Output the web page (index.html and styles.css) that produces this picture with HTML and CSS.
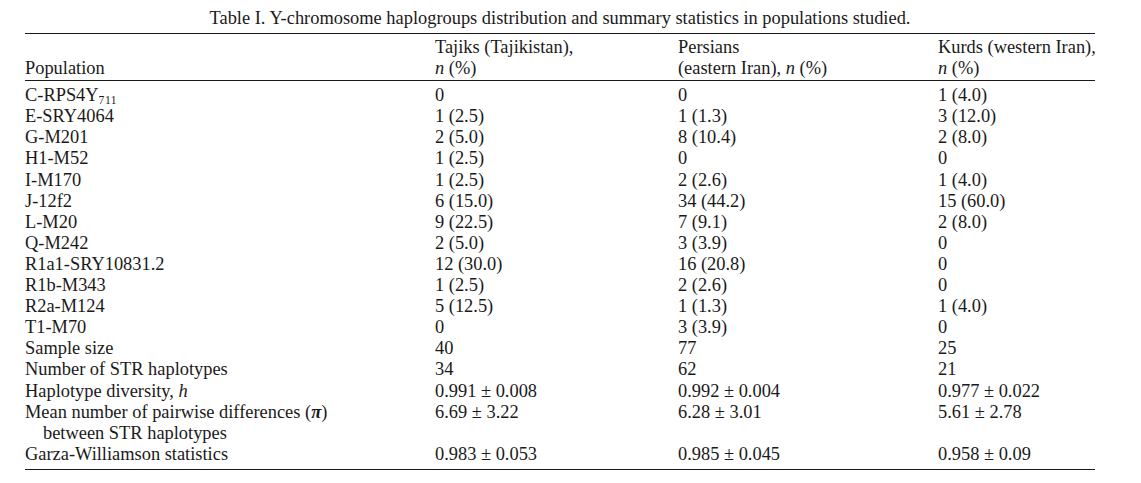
FILE: index.html
```html
<!DOCTYPE html>
<html>
<head>
<meta charset="utf-8">
<link rel="stylesheet" href="styles.css">
</head>
<body>
<div class="wrap">
  <div class="title">Table I. Y-chromosome haplogroups distribution and summary statistics in populations studied.</div>
  <table class="tbl">
    <colgroup>
      <col class="c1"><col class="c2"><col class="c3"><col class="c4">
    </colgroup>
    <thead>
      <tr>
        <th>Population</th>
        <th>Tajiks (Tajikistan),<br><i>n</i> (%)</th>
        <th>Persians<br>(eastern Iran), <i>n</i> (%)</th>
        <th>Kurds (western Iran),<br><i>n</i> (%)</th>
      </tr>
    </thead>
    <tbody>
      <tr class="first"><td>C-RPS4Y<sub>711</sub></td><td>0</td><td>0</td><td>1 (4.0)</td></tr>
      <tr><td>E-SRY4064</td><td>1 (2.5)</td><td>1 (1.3)</td><td>3 (12.0)</td></tr>
      <tr><td>G-M201</td><td>2 (5.0)</td><td>8 (10.4)</td><td>2 (8.0)</td></tr>
      <tr><td>H1-M52</td><td>1 (2.5)</td><td>0</td><td>0</td></tr>
      <tr><td>I-M170</td><td>1 (2.5)</td><td>2 (2.6)</td><td>1 (4.0)</td></tr>
      <tr><td>J-12f2</td><td>6 (15.0)</td><td>34 (44.2)</td><td>15 (60.0)</td></tr>
      <tr><td>L-M20</td><td>9 (22.5)</td><td>7 (9.1)</td><td>2 (8.0)</td></tr>
      <tr><td>Q-M242</td><td>2 (5.0)</td><td>3 (3.9)</td><td>0</td></tr>
      <tr><td>R1a1-SRY10831.2</td><td>12 (30.0)</td><td>16 (20.8)</td><td>0</td></tr>
      <tr><td>R1b-M343</td><td>1 (2.5)</td><td>2 (2.6)</td><td>0</td></tr>
      <tr><td>R2a-M124</td><td>5 (12.5)</td><td>1 (1.3)</td><td>1 (4.0)</td></tr>
      <tr><td>T1-M70</td><td>0</td><td>3 (3.9)</td><td>0</td></tr>
      <tr><td>Sample size</td><td>40</td><td>77</td><td>25</td></tr>
      <tr><td>Number of STR haplotypes</td><td>34</td><td>62</td><td>21</td></tr>
      <tr><td>Haplotype diversity, <i>h</i></td><td>0.991 ± 0.008</td><td>0.992 ± 0.004</td><td>0.977 ± 0.022</td></tr>
      <tr><td>Mean number of pairwise differences (<b><i>π</i></b>)<br><span class="indent">between STR haplotypes</span></td><td>6.69 ± 3.22</td><td>6.28 ± 3.01</td><td>5.61 ± 2.78</td></tr>
      <tr class="last"><td>Garza-Williamson statistics</td><td>0.983 ± 0.053</td><td>0.985 ± 0.045</td><td>0.958 ± 0.09</td></tr>
    </tbody>
  </table>
</div>
</body>
</html>
```

FILE: styles.css
```css
html, body {
  margin: 0;
  padding: 0;
  background: #ffffff;
}
body {
  font-family: "Liberation Serif", "Times New Roman", serif;
  font-size: 18.4px;
  color: #1a1a1a;
}
.wrap {
  width: 1070px;
  margin-left: 25px;
  padding-top: 8px;
}
.title {
  text-align: center;
  line-height: 21px;
  padding-bottom: 4px;
}
.tbl {
  width: 1070px;
  border-collapse: collapse;
  table-layout: fixed;
  border-top: 1px solid #1a1a1a;
  border-bottom: 1px solid #1a1a1a;
}
.c1 { width: 410px; }
.c2 { width: 243px; }
.c3 { width: 260px; }
.c4 { width: 157px; }
.tbl th, .tbl td {
  padding: 0;
  text-align: left;
  vertical-align: top;
  font-weight: normal;
  line-height: 21.1px;
  white-space: nowrap;
}
.tbl thead th {
  vertical-align: bottom;
  padding-top: 3px;
  padding-bottom: 1px;
  border-bottom: 1px solid #1a1a1a;
}
.tbl tr.first td { padding-top: 4px; }
.tbl tr.last td { padding-bottom: 4px; }
.tbl sub {
  font-size: 11.5px;
  line-height: 0;
  vertical-align: -3px;
  letter-spacing: 0.6px;
}
.indent {
  padding-left: 18px;
}
```
